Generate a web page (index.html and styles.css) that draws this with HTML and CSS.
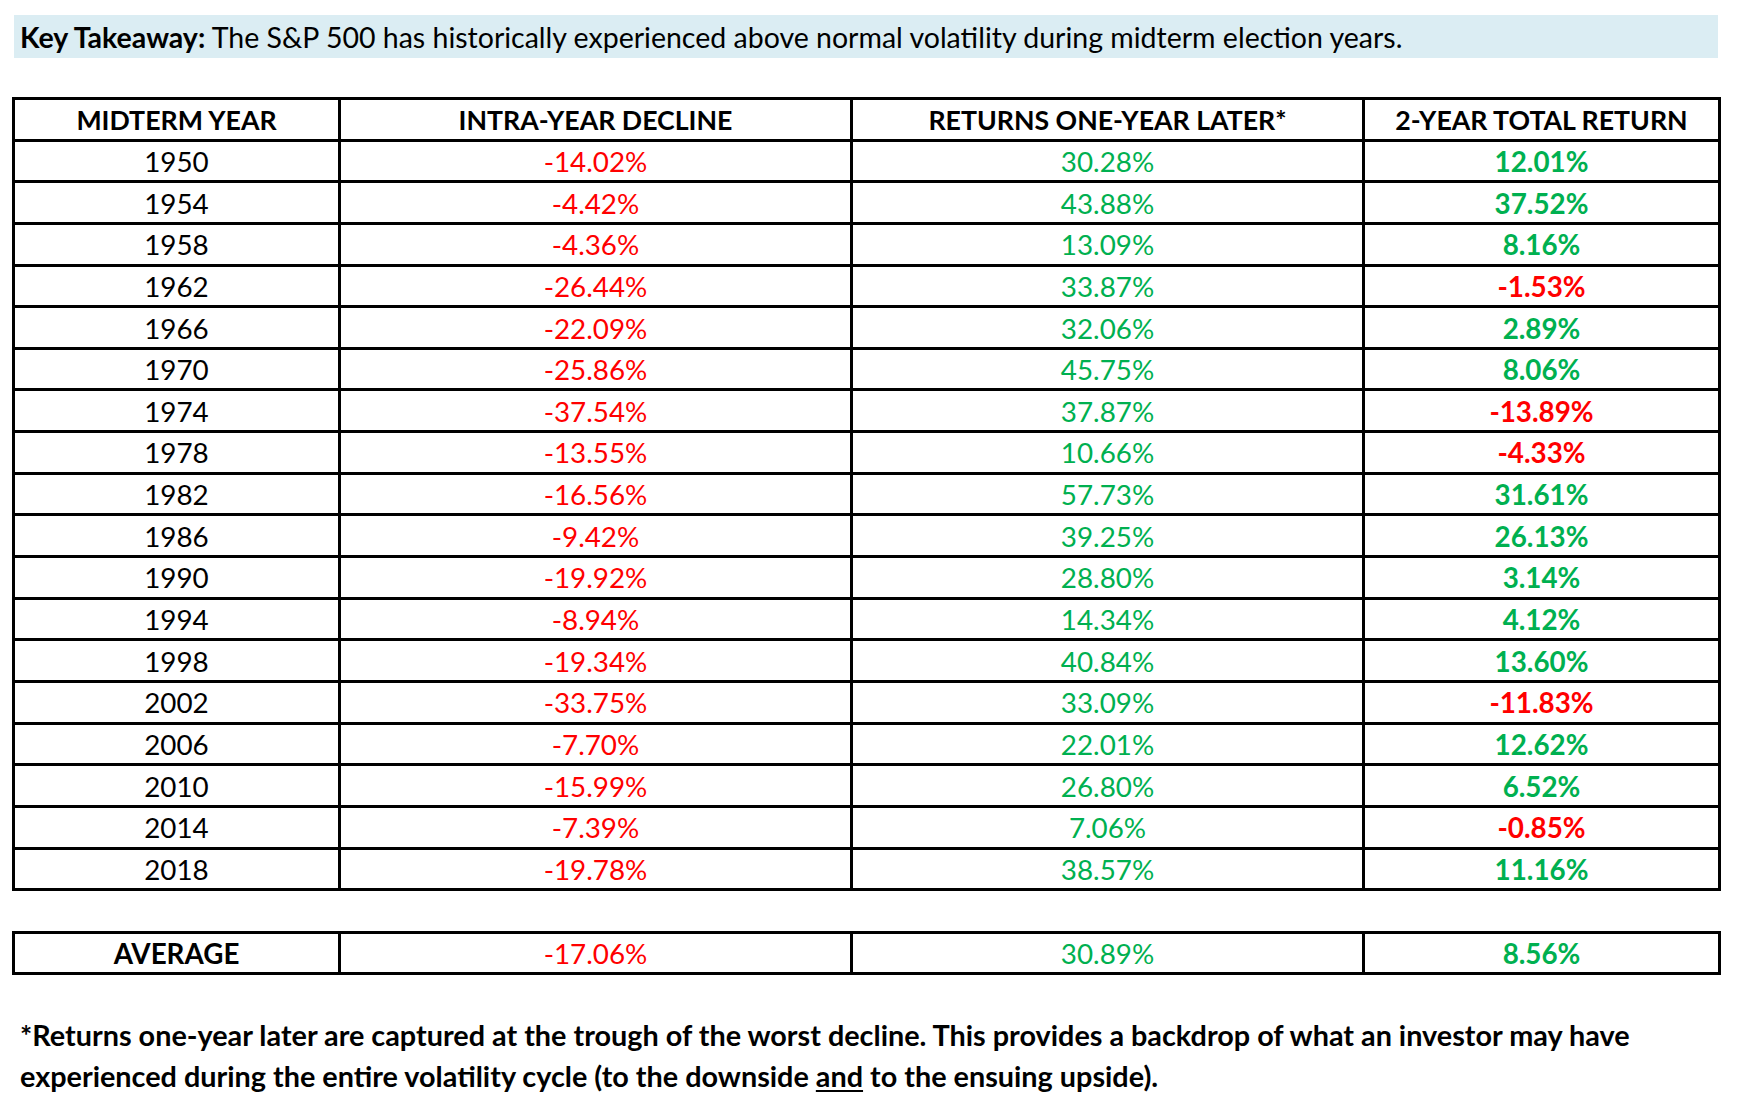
FILE: index.html
```html
<!DOCTYPE html>
<html>
<head>
<meta charset="utf-8">
<link rel="stylesheet" href="styles.css">
</head>
<body>
<div class="page">
  <div class="takeaway"><b>Key Takeaway:</b> The S&amp;P 500 has historically experienced above normal volatility during midterm election years.</div>

  <table class="grid main">
    <colgroup><col class="c1"><col class="c2"><col class="c3"><col class="c4"></colgroup>
    <thead>
      <tr><th>MIDTERM YEAR</th><th>INTRA-YEAR DECLINE</th><th>RETURNS ONE-YEAR LATER*</th><th>2-YEAR TOTAL RETURN</th></tr>
    </thead>
    <tbody>
      <tr><td>1950</td><td class="neg">-14.02%</td><td class="pos">30.28%</td><td class="pos b">12.01%</td></tr>
      <tr><td>1954</td><td class="neg">-4.42%</td><td class="pos">43.88%</td><td class="pos b">37.52%</td></tr>
      <tr><td>1958</td><td class="neg">-4.36%</td><td class="pos">13.09%</td><td class="pos b">8.16%</td></tr>
      <tr><td>1962</td><td class="neg">-26.44%</td><td class="pos">33.87%</td><td class="neg b">-1.53%</td></tr>
      <tr><td>1966</td><td class="neg">-22.09%</td><td class="pos">32.06%</td><td class="pos b">2.89%</td></tr>
      <tr><td>1970</td><td class="neg">-25.86%</td><td class="pos">45.75%</td><td class="pos b">8.06%</td></tr>
      <tr><td>1974</td><td class="neg">-37.54%</td><td class="pos">37.87%</td><td class="neg b">-13.89%</td></tr>
      <tr><td>1978</td><td class="neg">-13.55%</td><td class="pos">10.66%</td><td class="neg b">-4.33%</td></tr>
      <tr><td>1982</td><td class="neg">-16.56%</td><td class="pos">57.73%</td><td class="pos b">31.61%</td></tr>
      <tr><td>1986</td><td class="neg">-9.42%</td><td class="pos">39.25%</td><td class="pos b">26.13%</td></tr>
      <tr><td>1990</td><td class="neg">-19.92%</td><td class="pos">28.80%</td><td class="pos b">3.14%</td></tr>
      <tr><td>1994</td><td class="neg">-8.94%</td><td class="pos">14.34%</td><td class="pos b">4.12%</td></tr>
      <tr><td>1998</td><td class="neg">-19.34%</td><td class="pos">40.84%</td><td class="pos b">13.60%</td></tr>
      <tr><td>2002</td><td class="neg">-33.75%</td><td class="pos">33.09%</td><td class="neg b">-11.83%</td></tr>
      <tr><td>2006</td><td class="neg">-7.70%</td><td class="pos">22.01%</td><td class="pos b">12.62%</td></tr>
      <tr><td>2010</td><td class="neg">-15.99%</td><td class="pos">26.80%</td><td class="pos b">6.52%</td></tr>
      <tr><td>2014</td><td class="neg">-7.39%</td><td class="pos">7.06%</td><td class="neg b">-0.85%</td></tr>
      <tr><td>2018</td><td class="neg">-19.78%</td><td class="pos">38.57%</td><td class="pos b">11.16%</td></tr>
    </tbody>
  </table>

  <table class="grid avg">
    <colgroup><col class="c1"><col class="c2"><col class="c3"><col class="c4"></colgroup>
    <tbody>
      <tr><td class="lbl">AVERAGE</td><td class="neg">-17.06%</td><td class="pos">30.89%</td><td class="pos b">8.56%</td></tr>
    </tbody>
  </table>

  <p class="note">*Returns one-year later are captured at the trough of the worst decline. This provides a backdrop of what an investor may have experienced during the entire volatility cycle (to the downside <u>and</u> to the ensuing upside).</p>
</div>
</body>
</html>
```

FILE: styles.css
```css
html, body {
  margin: 0;
  padding: 0;
  background: #ffffff;
}

body {
  font-family: Lato, "Open Sans", "Liberation Sans", sans-serif;
  color: #000000;
  width: 1746px;
  height: 1099px;
  overflow: hidden;
}

.page {
  padding: 15px 28px 0 12px;
}

.takeaway {
  margin-left: 2px;
  width: 1704px;
  height: 43px;
  box-sizing: border-box;
  padding: 2px 0 0 6px;
  background: #dbedf3;
  font-size: 28.5px;
  line-height: 41px;
  white-space: nowrap;
}

.takeaway b {
  font-weight: 700;
}

.grid {
  width: 1706px;
  border-collapse: collapse;
  table-layout: fixed;
  border: 3px solid #000;
}

.main {
  margin-top: 39px;
}

.avg {
  margin-top: 40px;
}

.c1 { width: 326px; }
.c2 { width: 512px; }
.c3 { width: 512px; }
.c4 { width: 356px; }

.grid th,
.grid td {
  border: 3px solid #000;
  padding: 2px 0 0;
  height: 36.65px;
  text-align: center;
  vertical-align: middle;
  font-size: 27.8px;
  line-height: 30px;
  white-space: nowrap;
}

.grid th {
  font-weight: 700;
  font-size: 26.7px;
}

.avg td {
  height: 36px;
}

.lbl {
  font-weight: 700;
  font-size: 26.7px;
}

.neg { color: #ff0000; }
.pos { color: #00b050; }
.b { font-weight: 700; }

.note {
  margin: 40px 0 0 8px;
  width: 1690px;
  font-size: 28.8px;
  font-weight: 700;
  line-height: 41px;
}

.note u {
  text-decoration-thickness: 2px;
  text-underline-offset: 3px;
}
```
